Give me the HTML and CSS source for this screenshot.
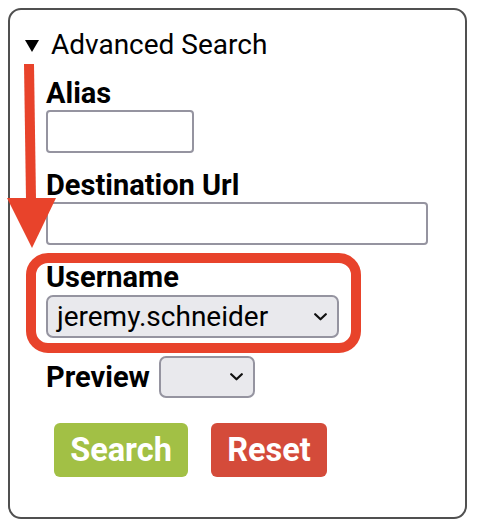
FILE: index.html
```html
<!DOCTYPE html>
<html>
<head>
<meta charset="utf-8">
<link rel="stylesheet" href="styles.css">
</head>
<body>
<div class="panel">
  <div class="summary">
    <svg class="tri" width="14" height="12" viewBox="0 0 14 12"><polygon points="0,0 14,0 7,12" fill="#000"/></svg>
    <span>Advanced Search</span>
  </div>
  <div class="form">
    <div class="field">
      <label class="label">Alias</label>
      <div class="input alias"></div>
    </div>
    <div class="field">
      <label class="label">Destination Url</label>
      <div class="input dest"></div>
    </div>
    <div class="field">
      <label class="label">Username</label>
      <div class="select user">
        <span>jeremy.schneider</span>
        <svg class="chev" width="13" height="8" viewBox="0 0 13 8"><polyline points="1.2,1.2 6.5,6.3 11.8,1.2" fill="none" stroke="#111" stroke-width="2.2" stroke-linecap="round" stroke-linejoin="round"/></svg>
      </div>
    </div>
    <div class="row">
      <label class="label">Preview</label>
      <div class="select preview">
        <span></span>
        <svg class="chev" width="13" height="8" viewBox="0 0 13 8"><polyline points="1.2,1.2 6.5,6.3 11.8,1.2" fill="none" stroke="#111" stroke-width="2.2" stroke-linecap="round" stroke-linejoin="round"/></svg>
      </div>
    </div>
    <div class="buttons">
      <button class="btn search">Search</button>
      <button class="btn reset">Reset</button>
    </div>
  </div>
</div>
<svg class="annot" width="478" height="529" viewBox="0 0 478 529">
  <polygon points="24,64 34,64 36,200 26,200" fill="#e8432b"/>
  <polygon points="7,198 56,198 32,248" fill="#e8432b"/>
  <rect x="31" y="258" width="325" height="90" rx="17" ry="17" fill="none" stroke="#e8432b" stroke-width="10"/>
</svg>
</body>
</html>
```

FILE: styles.css
```css
* { box-sizing: border-box; }
html, body { margin: 0; padding: 0; background: #fff; }
body {
  position: relative;
  width: 478px;
  height: 529px;
  font-family: Roboto, "Liberation Sans", sans-serif;
  color: #000;
  overflow: hidden;
}
.panel {
  margin: 8px;
  width: 459px;
  height: 511px;
  border: 2px solid #505050;
  border-radius: 13px;
  padding: 18px 0 0 15px;
}
.summary {
  display: flex;
  align-items: center;
  height: 33px;
  font-size: 28px;
  line-height: 33px;
}
.tri { margin-right: 12px; margin-top: 2px; flex: none; }
.form {
  display: flex;
  flex-direction: column;
  align-items: flex-start;
  padding-left: 21px;
  padding-top: 15px;
}
.field { display: flex; flex-direction: column; align-items: flex-start; margin-bottom: 15px; }
.label {
  font-weight: 700;
  font-size: 29px;
  line-height: 34px;
  display: block;
}
.input {
  height: 43px;
  border: 2px solid #9594a0;
  border-radius: 4px;
  background: #fff;
}
.alias { width: 148px; }
.dest { width: 382px; }
.select {
  display: flex;
  align-items: center;
  justify-content: space-between;
  height: 43px;
  border: 2px solid #9594a0;
  border-radius: 7px;
  background: #e9e9ed;
  padding: 0 10px 0 9px;
  font-size: 28px;
  line-height: 33px;
  color: #000;
}
.user { width: 293px; margin-top: 1px; }
.field:nth-child(3) { margin-bottom: 18px; }
.row {
  display: flex;
  align-items: center;
  gap: 9px;
}
.preview { width: 96px; height: 42px; }
.buttons {
  display: flex;
  gap: 23px;
  margin-top: 25px;
  padding-left: 8px;
}
.btn {
  border: none;
  height: 54px;
  border-radius: 6px;
  color: #fff;
  font-family: Roboto, "Liberation Sans", sans-serif;
  font-weight: 700;
  font-size: 32.5px;
  padding: 0;
  line-height: 54px;
}
.search { width: 134px; background: #a2c045; }
.reset { width: 116px; background: #d44b3a; }
.annot {
  position: absolute;
  left: 0;
  top: 0;
  pointer-events: none;
}
```
